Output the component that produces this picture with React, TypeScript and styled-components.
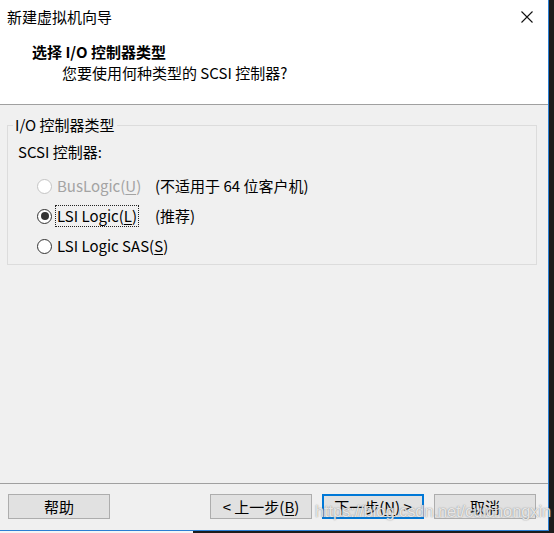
import React from "react";
import styled, { createGlobalStyle } from "styled-components";

const GlobalStyle = createGlobalStyle`
  html, body {
    margin: 0;
    padding: 0;
    background: #1c1c1c;
  }
  * {
    box-sizing: border-box;
  }
`;

const FONT = `"Noto Sans CJK SC", "Liberation Sans", sans-serif`;

const Screen = styled.div`
  width: 554px;
  height: 533px;
  background: #1c1c1c;
  overflow: hidden;
  position: relative;
  font-family: ${FONT};
  font-size: 15px;
  color: #000;
`;

const Window = styled.div`
  width: 549px;
  height: 531px;
  display: flex;
  flex-direction: column;
  background: #f0f0f0;
  border-right: 1px solid #2b7fd3;
  border-bottom: 1px solid #2b7fd3;
`;

const BottomStrip = styled.div`
  height: 2px;
  display: flex;
  .light {
    width: 193px;
    background: #f4f4f4;
  }
`;

const TitleBar = styled.div`
  height: 34px;
  flex: none;
  background: #fff;
  display: flex;
  align-items: center;
  justify-content: space-between;
  padding-left: 7px;
  line-height: 20px;
`;

const CloseButton = styled.div`
  width: 42px;
  height: 34px;
  display: flex;
  align-items: center;
  justify-content: center;
`;

const Header = styled.div`
  height: 71px;
  flex: none;
  background: #fff;
  border-bottom: 1px solid #a0a0a0;
  padding-top: 8px;
  line-height: 20px;
`;

const Heading = styled.div`
  padding-left: 32px;
  font-weight: 700;
  height: 21px;
`;

const SubHeading = styled.div`
  padding-left: 62px;
`;

const Body = styled.div`
  flex: 1;
  padding: 10px 11px 0 7px;
  line-height: 20px;
`;

const Group = styled.fieldset`
  margin: 0;
  padding: 0 0 3px 5px;
  border: 1px solid #dcdcdc;
  min-width: 0;
  legend {
    padding: 0 2px;
    line-height: 20px;
  }
`;

const GroupLabel = styled.div`
  padding: 7px 0 9px 5px;
`;

const Options = styled.div`
  display: grid;
  grid-template-columns: 118px auto;
  grid-auto-rows: 30px;
  align-items: center;
  padding-left: 24px;
  white-space: nowrap;
`;

const RadioLabel = styled.div<{ $disabled?: boolean }>`
  display: flex;
  align-items: center;
  color: ${({ $disabled }) => ($disabled ? "#a3a3a3" : "#000")};
`;

const Circle = styled.span<{ $checked?: boolean; $disabled?: boolean }>`
  width: 15px;
  height: 15px;
  flex: none;
  border-radius: 50%;
  border: 1px solid ${({ $disabled }) => ($disabled ? "#c4c4c4" : "#333")};
  background: #fff;
  display: flex;
  align-items: center;
  justify-content: center;
  &::after {
    content: "";
    width: 8px;
    height: 8px;
    border-radius: 50%;
    background: ${({ $checked }) => ($checked ? "#333" : "transparent")};
  }
`;

const LabelText = styled.span<{ $focused?: boolean }>`
  margin-left: 3px;
  padding: 0 1px;
  line-height: 20px;
  border: 1px dotted ${({ $focused }) => ($focused ? "#222" : "transparent")};
  u {
    text-underline-offset: 2px;
  }
`;

const Note = styled.span`
  padding-left: 0;
`;

const Footer = styled.div`
  height: 47px;
  flex: none;
  border-top: 1px solid #a0a0a0;
  padding: 10px 12px 0 8px;
  display: flex;
  align-items: flex-start;
`;

const NavGroup = styled.div`
  margin-left: auto;
  display: flex;
  gap: 10px;
`;

const Button = styled.div<{ $focused?: boolean }>`
  width: 102px;
  height: 25px;
  background: #e1e1e1;
  border: 1px solid ${({ $focused }) => ($focused ? "#0078d7" : "#adadad")};
  box-shadow: ${({ $focused }) => ($focused ? "inset 0 0 0 1px #0078d7" : "none")};
  display: flex;
  align-items: center;
  justify-content: center;
  line-height: 19px;
  white-space: nowrap;
  u {
    text-underline-offset: 2px;
  }
`;

const Watermark = styled.div`
  position: absolute;
  left: 315px;
  top: 502px;
  font-family: "Liberation Sans", Arial, sans-serif;
  font-size: 16.5px;
  letter-spacing: -0.1px;
  color: rgba(255, 255, 255, 0.8);
  text-shadow: 0 0 1px rgba(90, 90, 90, 0.65), 0 0 2px rgba(140, 140, 140, 0.4);
  pointer-events: none;
  white-space: nowrap;
`;

const CloseIcon = () => (
  <svg width="12" height="12" viewBox="0 0 12 12">
    <path d="M0.5 0.5 L11.5 11.5 M11.5 0.5 L0.5 11.5" stroke="#111" strokeWidth="1.1" fill="none" />
  </svg>
);

const options = [
  { label: "BusLogic(", key: "U", note: "(不适用于 64 位客户机)", disabled: true },
  { label: "LSI Logic(", key: "L", note: "(推荐)", checked: true },
  { label: "LSI Logic SAS(", key: "S", note: "" },
];

export default function App() {
  return (
    <>
      <GlobalStyle />
      <Screen>
        <Window>
          <TitleBar>
            <span>新建虚拟机向导</span>
            <CloseButton>
              <CloseIcon />
            </CloseButton>
          </TitleBar>
          <Header>
            <Heading>选择 I/O 控制器类型</Heading>
            <SubHeading>您要使用何种类型的 SCSI 控制器?</SubHeading>
          </Header>
          <Body>
            <Group>
              <legend>I/O 控制器类型</legend>
              <GroupLabel>SCSI 控制器:</GroupLabel>
              <Options>
                {options.map((o) => (
                  <React.Fragment key={o.key}>
                    <RadioLabel $disabled={o.disabled}>
                      <Circle $checked={o.checked} $disabled={o.disabled} />
                      <LabelText $focused={o.checked}>
                        {o.label}
                        <u>{o.key}</u>)
                      </LabelText>
                    </RadioLabel>
                    <Note>{o.note}</Note>
                  </React.Fragment>
                ))}
              </Options>
            </Group>
          </Body>
          <Footer>
            <Button>帮助</Button>
            <NavGroup>
              <Button>
                &lt; 上一步(<u>B</u>)
              </Button>
              <Button $focused>
                下一步(<u>N</u>) &gt;
              </Button>
              <Button>取消</Button>
            </NavGroup>
          </Footer>
        </Window>
        <BottomStrip>
          <div className="light" />
        </BottomStrip>
        <Watermark>https://blog.csdn.net/cuichongxin</Watermark>
      </Screen>
    </>
  );
}
